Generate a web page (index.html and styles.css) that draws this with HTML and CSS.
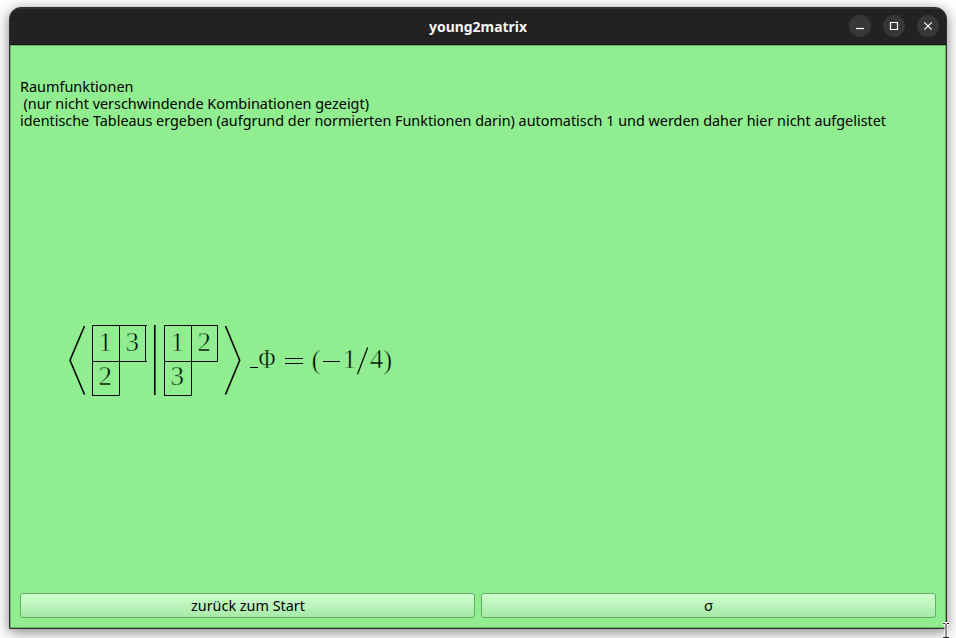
FILE: index.html
```html
<!DOCTYPE html>
<html lang="de">
<head>
<meta charset="utf-8">
<title>young2matrix</title>
<link rel="stylesheet" href="styles.css">
</head>
<body>
<div class="window">
  <header class="titlebar">
    <h1 class="title"><svg width="98" height="24"><text x="0" y="17" textLength="98" lengthAdjust="spacingAndGlyphs">young2matrix</text></svg></h1>
    <div class="controls">
      <span class="control"><svg width="22" height="22"><path d="M7 13.5h8"/></svg></span>
      <span class="control"><svg width="22" height="22"><path d="M7.5 7.5h7v7h-7z"/></svg></span>
      <span class="control"><svg width="22" height="22"><path d="M7.3 7.3l7.4 7.4M14.7 7.3l-7.4 7.4"/></svg></span>
    </div>
  </header>
  <main class="content">
    <svg class="intro" width="900" height="56">
      <text x="0" y="14" textLength="113.5" lengthAdjust="spacingAndGlyphs">Raumfunktionen</text>
      <text x="3.5" y="31" textLength="345.5" lengthAdjust="spacingAndGlyphs">(nur nicht verschwindende Kombinationen gezeigt)</text>
      <text x="0" y="48" textLength="866" lengthAdjust="spacingAndGlyphs">identische Tableaus ergeben (aufgrund der normierten Funktionen darin) automatisch 1 und werden daher hier nicht aufgelistet</text>
    </svg>
    <svg class="formula" width="340" height="90" viewBox="60 315 340 90">
      <path class="bracket" d="M84.5 326L70 360.3L84.5 394.5M225.5 326L239.7 360.3L225.5 394.5"/>
      <path class="rule" d="M92.5 396V325.5H147M92 361.5H147M119.5 325V395.5H92M145.5 325V362M164.5 396V325.5H217.5V361.5H164M191.5 325V395.5H164"/>
      <path class="bracket" d="M154.8 325V395"/>
      <g class="digit">
        <text x="105.3" y="351">1</text><text x="132.2" y="351">3</text><text x="105.3" y="385">2</text>
        <text x="177.3" y="351">1</text><text x="204.2" y="351">2</text><text x="177.3" y="385">3</text>
      </g>
      <path class="rule" d="M250 367.5h8M285 358.5h18M285 363.5h18M323 361.5h17"/>
      <g class="digit">
        <text x="267" y="368" textLength="17" lengthAdjust="spacingAndGlyphs">Φ</text>
        <text x="316" y="368.5">(</text><text x="349.5" y="368">1</text><text x="376.5" y="368">4</text><text x="387.7" y="368.5">)</text>
      </g>
      <path class="slash" d="M367.7 347.5L357.5 374.3"/>
    </svg>
    <nav class="actions">
      <button class="action"><svg width="114" height="22"><text x="0" y="16" textLength="114" lengthAdjust="spacingAndGlyphs">zurück zum Start</text></svg></button>
      <button class="action"><span class="sigma">σ</span></button>
    </nav>
  </main>
</div>
<svg class="cursor" width="8" height="16"><path class="halo" d="M1 1.5h2l1 1l1-1h2M4 2.5v13M1 15.5h6"/><path d="M1 1.5h2l1 1l1-1h2M4 2.5v13M1 15.5h6"/></svg>
</body>
</html>
```
FILE: styles.css
```css
* { box-sizing: border-box; }
body {
  margin: 0;
  height: 638px;
  padding: 7px 9px 9px;
  overflow: hidden;
  background: #fff;
  font: 14.7px "Noto Sans", sans-serif;
  color: #000;
}
.window {
  height: 622px;
  display: flex;
  flex-direction: column;
  border: 1px solid #303030;
  border-radius: 12px 12px 0 0;
  background: #222;
  box-shadow: 0 3px 14px rgba(0, 0, 0, .5);
}
.titlebar {
  height: 37px;
  display: grid;
  grid-template-columns: 1fr auto 1fr;
  align-items: center;
  border-top: 1px solid #353535;
  border-bottom: 1px solid #151515;
  border-radius: 11px 11px 0 0;
}
.title {
  grid-column: 2;
  margin: 0;
  height: 24px;
  font-size: 14px;
  font-weight: 700;
}
.title svg { fill: #f7f7f7; display: block; }
.controls {
  display: flex;
  justify-content: flex-end;
  gap: 12px;
  padding-right: 7px;
  margin-top: -1px;
}
.control {
  width: 22px;
  height: 22px;
  border-radius: 50%;
  background: #373737;
}
.control svg { display: block; fill: none; stroke: #fff; stroke-width: 1.2; }
.content {
  flex: 1;
  display: flex;
  flex-direction: column;
  padding: 32px 9px 9px;
  border: 1px solid #6bb36b;
  background: #90ee90;
}
.intro { display: block; overflow: visible; flex: none; }
.formula { display: block; margin: 181px 0 0 40px; flex: none; }
.bracket { fill: none; stroke: #000; stroke-width: 1.6; }
.rule { fill: none; stroke: #000; }
.slash { stroke: #000; stroke-width: 1.2; }
.digit {
  font: 27px "Liberation Serif", serif;
  text-anchor: middle;
  stroke: #90ee90;
  stroke-width: .55px;
}
.actions {
  margin-top: auto;
  display: flex;
  gap: 6px;
}
.action {
  flex: 1;
  height: 25px;
  padding: 0;
  display: flex;
  align-items: center;
  justify-content: center;
  border: 1px solid #68ac68;
  border-radius: 3px;
  background: linear-gradient(#d0ffd0, #a6e9a6);
  font: inherit;
  color: #000;
}
.sigma { padding-bottom: 2px; }
.cursor {
  position: absolute;
  left: 942px;
  top: 622px;
  fill: none;
  stroke: #222;
}
.cursor .halo { stroke: #fff; stroke-width: 3; }
```
